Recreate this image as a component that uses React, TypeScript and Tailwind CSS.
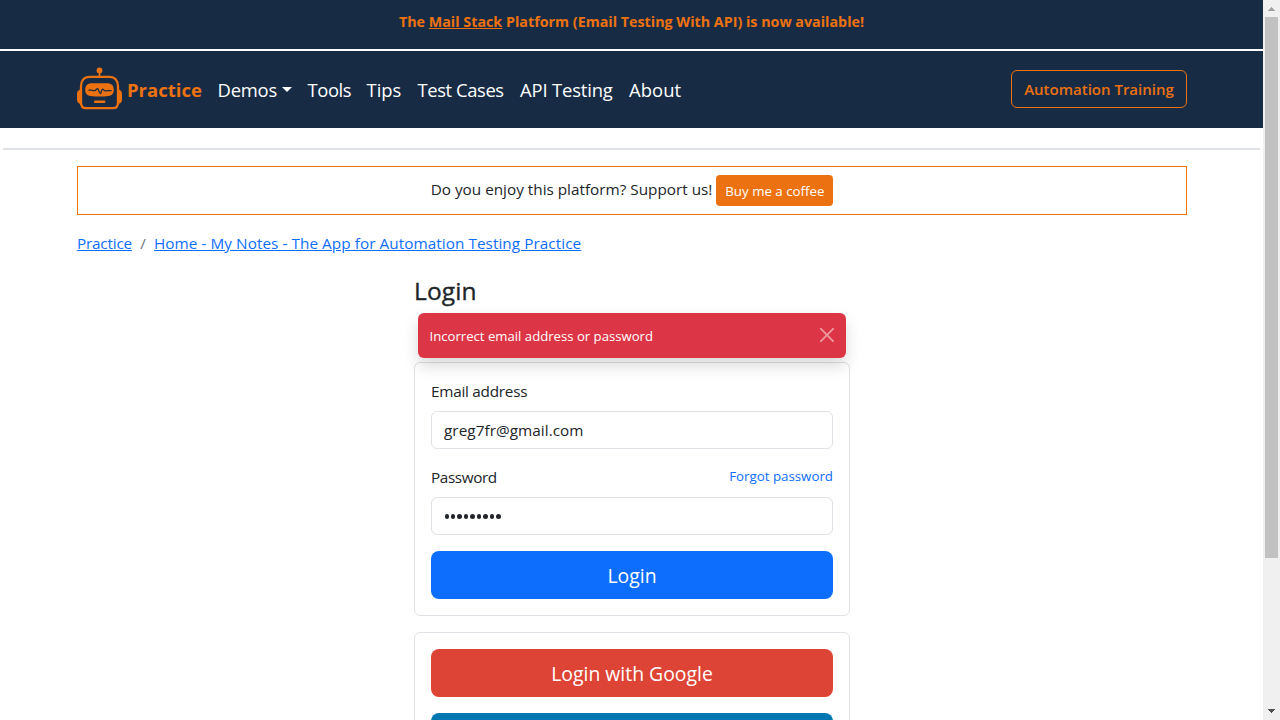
import type { ReactNode } from "react";

function RobotLogo() {
  return (
    <svg width="46" height="44" viewBox="0 0 46 44" fill="none" className="-mt-[2px] shrink-0">
      <circle cx="22.5" cy="3.5" r="2.9" fill="#ec7211" />
      <path d="M22.5 4v6" stroke="#ec7211" strokeWidth="1.7" />
      <path
        d="M12.500 9.800h20c5.500 0 8.500 4.200 8.500 9.700v16c0 3.600-1.800 5.700-5 5.700H9c-3.200 0-5-2.100-5-5.700v-16c0-5.500 3-9.700 8.500-9.700Z"
        stroke="#ec7211"
        strokeWidth="2.3"
      />
      <path d="M3.600 22.500C1.400 22.900 0 24.500 0 26.700v6.100c0 2.200 1.400 3.800 3.600 4.200ZM41.400 22.500c2.200.4 3.600 2 3.600 4.200v6.100c0 2.200-1.400 3.800-3.600 4.200Z" fill="#ec7211" />
      <path
        d="M15 16.200h15c4.600 0 6.800 2.300 6.800 6.500s-2.200 5.900-5.400 6.300c-6 .8-11.800.8-17.800 0-3.200-.4-5.400-2.100-5.400-6.300s2.200-6.500 6.800-6.500Z"
        fill="#ec7211"
      />
      <path
        d="M12 23.200c2.500-.4 3.700.5 5.600.4 1.500-.1 1.800-2.100 3-2 1.200.2 1.500 5 2.700 5 1 0 1.100-4.500 2.300-4.500.9 0 1.200 1.500 2.400 1.700 1.800.3 3.500-.5 6-.2"
        stroke="#182b44"
        strokeWidth="1.3"
        strokeLinecap="round"
      />
      <rect x="17" y="33.600" width="11.300" height="2.500" rx="0.800" fill="#ec7211" />
    </svg>
  );
}

function NavLink({ className, children }: { className: string; children: ReactNode }) {
  return (
    <a href="#" className={`block whitespace-nowrap ${className}`}>
      {children}
    </a>
  );
}

function Scrollbar() {
  return (
    <div className="flex h-full w-[17px] shrink-0 flex-col items-center bg-[#f0f0f0]">
      <svg width="17" height="17" shapeRendering="crispEdges">
        <path d="M8 7h1v1h1v1h1v1h1v1H5v-1h1v-1h1v-1h1z" fill="#a3a3a3" />
      </svg>
      <div className="h-[541px] w-[13px] bg-[#c1c1c1]" />
      <svg width="17" height="17" shapeRendering="crispEdges" className="mt-auto">
        <path d="M5 6h7v1h-1v1h-1v1H9v1H8V9H7V8H6V7H5z" fill="#505050" />
      </svg>
    </div>
  );
}

export default function App() {
  return (
    <div className="flex h-[720px] w-[1280px] overflow-hidden bg-white font-['Open_Sans','Noto_Sans',sans-serif] text-[15.3px] leading-6 text-[#212529]">
      <div className="h-full w-[1263px] overflow-hidden">
        <div className="h-[49px] bg-[#182b44] pt-[10px] text-center text-[14.3px] font-bold text-[#ec7211]">
          The{" "}
          <a href="#" className="underline">
            Mail Stack
          </a>{" "}
          Platform (Email Testing With API) is now available!
        </div>

        <nav className="mt-[2px] flex h-[77px] items-center bg-[#182b44] pr-[76px] pl-[77px] text-[18.4px] leading-[30px] text-white">
          <a href="#" className="flex w-[140.500px] items-center">
            <RobotLogo />
            <span className="ml-[4px] text-[18.5px] font-bold text-[#ec7211]">Practice</span>
          </a>
          <NavLink className="flex w-[90px] items-center tracking-[-0.2px]">
            Demos
            <svg width="10" height="5" viewBox="0 0 10 5" className="ml-[5px]">
              <path d="M0 0h10L5 5z" fill="white" />
            </svg>
          </NavLink>
          <NavLink className="w-[59px] tracking-[-0.4px]">Tools</NavLink>
          <NavLink className="w-[51px]">Tips</NavLink>
          <NavLink className="w-[102.500px] tracking-[-0.4px]">Test Cases</NavLink>
          <NavLink className="w-[109px] tracking-[-0.15px]">API Testing</NavLink>
          <NavLink className="tracking-[0.1px]">About</NavLink>
          <button className="-mt-[2px] ml-auto h-[38px] w-[176px] rounded-md border border-[#ec7211] text-[15px] leading-6 font-semibold whitespace-nowrap text-[#ec7211]">
            Automation Training
          </button>
        </nav>

        <hr className="mx-[3px] mt-5 border-t-2 border-[#dee2e6]" />

        <main className="mt-4 ml-[77px] w-[1110px]">
          <div className="flex h-[49px] items-center justify-center border border-[#ec7211]">
            <span className="mr-[4px] -mt-[3px] whitespace-nowrap">Do you enjoy this platform? Support us!</span>
            <button className="h-[31px] w-[117px] rounded bg-[#ec7211] pt-[2px] text-[13.3px] leading-[21px] whitespace-nowrap text-white">
              Buy me a coffee
            </button>
          </div>

          <div className="mt-4 flex h-6 whitespace-nowrap text-[#0d6efd]">
            <a href="#" className="w-[55px] tracking-[-0.2px] underline">
              Practice
            </a>
            <span className="w-[22px] text-center text-[#6c757d]">/</span>
            <a href="#" className="tracking-[0.06px] underline">
              Home - My Notes - The App for Automation Testing Practice
            </a>
          </div>

          <div className="ml-[337px] w-[436px]">
            <h1 className="mt-[21px] h-[37px] text-[24.5px] leading-[30px] font-medium tracking-[0.15px] [-webkit-text-stroke:0.35px_#212529]">Login</h1>

            <div className="relative z-10 mx-1 flex h-[45px] items-center justify-between rounded-md bg-[#dc3545] pr-3 pl-[11.500px] text-[13.15px] text-white shadow-[0_8px_16px_rgba(0,0,0,0.15)]">
              <span>Incorrect email address or password</span>
              <svg width="14" height="14" viewBox="0 0 14 14" className="-mt-px opacity-50">
                <path d="M.7.7l12.600 12.600M13.300.7L.7 13.300" stroke="white" strokeWidth="1.700" strokeLinecap="round" />
              </svg>
            </div>

            <form className="mt-1 h-[254px] rounded-md border border-[#dee2e6] px-4 pt-4">
              <label className="block h-8 tracking-[-0.25px]">Email address</label>
              <div className="h-[38px] rounded-md border border-[#dee2e6] px-3 py-1.5 tracking-[0.05px]">greg7fr@gmail.com</div>
              <div className="mt-4 flex h-8 justify-between">
                <label className="tracking-[-0.4px]">Password</label>
                <a href="#" className="text-[13.3px] leading-[23px] text-[#0d6efd]">
                  Forgot password
                </a>
              </div>
              <div className="flex h-[38px] items-center gap-[2.100px] rounded-md border border-[#dee2e6] px-[12.500px] pt-px">
                {Array.from({ length: 9 }, (_, i) => (
                  <span key={i} className="size-[4.400px] rounded-full bg-[#212529]" />
                ))}
              </div>
              <button className="mt-4 block h-12 w-full rounded-lg bg-[#0d6efd] pt-[2px] text-[19.4px] leading-[30px] text-white">Login</button>
            </form>

            <div className="mt-4 rounded-md border border-[#dee2e6] p-4">
              <button className="block h-12 w-full rounded-lg bg-[#dd4435] pt-[2px] text-[19.4px] leading-[30px] text-white">Login with Google</button>
              <button className="mt-4 block h-12 w-full rounded-lg bg-[#0077b0]" />
            </div>
          </div>
        </main>
      </div>
      <Scrollbar />
    </div>
  );
}
